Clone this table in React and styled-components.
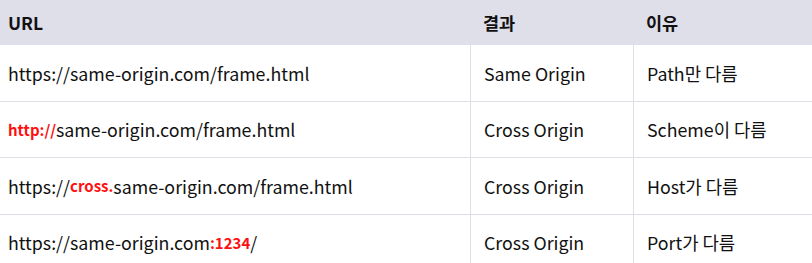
import React from "react";
import styled, { createGlobalStyle } from "styled-components";

const Global = createGlobalStyle`
  body {
    margin: 0;
    background: #fff;
    font-family: "Noto Sans CJK KR", "Noto Sans", sans-serif;
    color: #111;
  }
`;

const Table = styled.div`
  width: 812px;
  display: grid;
  grid-template-columns: 470px 163px 1fr;
`;

const Head = styled.div`
  height: 44px;
  background: #dfdfea;
  border-bottom: 1px solid #dfdfea;
  display: flex;
  align-items: center;
  padding-left: ${(p) => (p.first ? "8px" : "13px")};
  font-size: 17.5px;
  font-weight: 700;
`;

const Cell = styled.div`
  height: 55.5px;
  display: flex;
  align-items: center;
  padding-left: ${(p) => (p.first ? "8px" : "13px")};
  border-bottom: 1px solid #dedee6;
  border-left: ${(p) => (p.first ? "none" : "1px solid #dedee6")};
  font-size: 17.8px;
  white-space: pre;
`;

const Mark = styled.span`
  color: #ff1010;
  font-weight: 700;
  font-size: 15px;
`;

const rows = [
  { url: ["https://same-origin.com/frame.html"], result: "Same Origin", reason: "Path만 다름" },
  { url: [<Mark key="m">http://</Mark>, "same-origin.com/frame.html"], result: "Cross Origin", reason: "Scheme이 다름" },
  { url: ["https://", <Mark key="m">cross.</Mark>, "same-origin.com/frame.html"], result: "Cross Origin", reason: "Host가 다름" },
  { url: ["https://same-origin.com", <Mark key="m">:1234</Mark>, "/"], result: "Cross Origin", reason: "Port가 다름" },
];

export default function App() {
  return (
    <>
      <Global />
      <Table>
        <Head first>URL</Head>
        <Head>결과</Head>
        <Head>이유</Head>
        {rows.map((r, i) => (
          <React.Fragment key={i}>
            <Cell first>{r.url}</Cell>
            <Cell>{r.result}</Cell>
            <Cell>{r.reason}</Cell>
          </React.Fragment>
        ))}
      </Table>
    </>
  );
}
